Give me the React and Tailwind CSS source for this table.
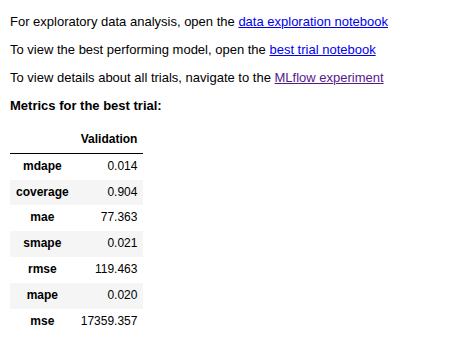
export default function App() {
  const rows = [
    ["mdape", "0.014"],
    ["coverage", "0.904"],
    ["mae", "77.363"],
    ["smape", "0.021"],
    ["rmse", "119.463"],
    ["mape", "0.020"],
    ["mse", "17359.357"],
  ];
  return (
    <div className="bg-white w-[452px] h-[341px] overflow-hidden pt-[14px] px-[10px] text-black" style={{ fontFamily: '"Liberation Sans", Arial, Helvetica, sans-serif' }}>
      <p className="text-[13px] leading-[16px] mb-[12px]">
        For exploratory data analysis, open the{" "}
        <a href="#" className="text-[#0000ee] underline">data exploration notebook</a>
      </p>
      <p className="text-[13px] leading-[16px] mb-[12px]">
        To view the best performing model, open the{" "}
        <a href="#" className="text-[#0000ee] underline">best trial notebook</a>
      </p>
      <p className="text-[13px] leading-[16px] mb-[12px]">
        To view details about all trials, navigate to the{" "}
        <a href="#" className="text-[#551a8b] underline">MLflow experiment</a>
      </p>
      <p className="text-[13px] leading-[16px] font-bold mb-[13px]">Metrics for the best trial:</p>
      <table className="border-collapse text-[12px] leading-[13.8px]">
        <thead className="border-b border-black">
          <tr>
            <th className="px-[6px] py-[6px]"></th>
            <th className="px-[6px] py-[6px] text-right font-bold">Validation</th>
          </tr>
        </thead>
        <tbody>
          {rows.map(([k, v], i) => (
            <tr key={k} className={i % 2 === 1 ? "bg-[#f5f5f5]" : ""}>
              <th className="px-[6px] py-[6px] text-center font-bold">{k}</th>
              <td className="px-[6px] py-[6px] text-right">{v}</td>
            </tr>
          ))}
        </tbody>
      </table>
    </div>
  );
}
